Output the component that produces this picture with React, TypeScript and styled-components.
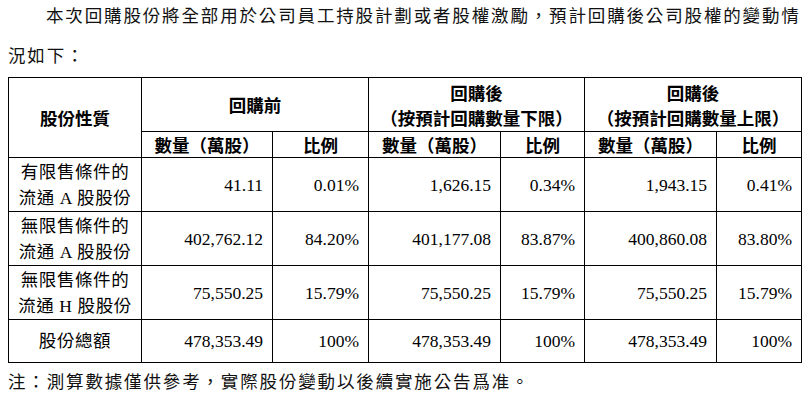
import React from "react";
import styled, { createGlobalStyle } from "styled-components";

const Global = createGlobalStyle`
  html, body { margin: 0; padding: 0; background: #fff; }
  body { font-family: "Liberation Serif", "Noto Sans CJK TC", serif; color: #000; }
`;

const Page = styled.div`
  width: 806px;
  height: 404px;
  padding: 0 5px 0 8px;
  box-sizing: border-box;
  overflow: hidden;
`;

const Para = styled.p`
  margin: -4px 0 0 0;
  font-size: 17.5px;
  line-height: 40px;
  letter-spacing: 1.85px;
  text-indent: 38px;
  color: #111;
`;

const Table = styled.table`
  border-collapse: collapse;
  table-layout: fixed;
  width: 794px;
  margin-top: 1px;
  font-size: 17.5px;
`;

const Th = styled.th<{ $h?: number }>`
  border: 1px solid #000;
  font-family: "Noto Sans CJK TC", sans-serif;
  font-weight: 700;
  font-size: 17.5px;
  line-height: 25px;
  text-align: center;
  padding: 0;
  height: ${(p) => p.$h ?? 25}px;
`;

const Td = styled.td<{ $num?: boolean; $h?: number }>`
  border: 1px solid #000;
  padding: 0 ${(p) => (p.$num ? "9px" : "0")} 0 0;
  text-align: ${(p) => (p.$num ? "right" : "center")};
  line-height: 26px;
  height: ${(p) => p.$h ?? 53}px;
  white-space: nowrap;
`;

const Label = styled.span`
  display: block;
  letter-spacing: 0.6px;
`;

const Note = styled.p`
  margin: 6px 0 0 0;
  font-size: 17.5px;
  line-height: 26px;
  letter-spacing: 1.85px;
  color: #111;
`;

const rows = [
  { l1: "有限售條件的", l2: "流通 A 股股份", v: ["41.11", "0.01%", "1,626.15", "0.34%", "1,943.15", "0.41%"] },
  { l1: "無限售條件的", l2: "流通 A 股股份", v: ["402,762.12", "84.20%", "401,177.08", "83.87%", "400,860.08", "83.80%"] },
  { l1: "無限售條件的", l2: "流通 H 股股份", v: ["75,550.25", "15.79%", "75,550.25", "15.79%", "75,550.25", "15.79%"] },
];
const total = ["478,353.49", "100%", "478,353.49", "100%", "478,353.49", "100%"];

export default function App() {
  return (
    <Page>
      <Global />
      <Para>
        本次回購股份將全部用於公司員工持股計劃或者股權激勵，預計回購後公司股權的變動情況如下：
      </Para>
      <Table>
        <colgroup>
          <col style={{ width: 133 }} />
          <col style={{ width: 131 }} />
          <col style={{ width: 96 }} />
          <col style={{ width: 132 }} />
          <col style={{ width: 84 }} />
          <col style={{ width: 132 }} />
          <col style={{ width: 85 }} />
        </colgroup>
        <thead>
          <tr>
            <Th rowSpan={2} $h={53}>股份性質</Th>
            <Th colSpan={2} $h={53}>回購前</Th>
            <Th colSpan={2} $h={53}>回購後<br />（按預計回購數量下限）</Th>
            <Th colSpan={2} $h={53}>回購後<br />（按預計回購數量上限）</Th>
          </tr>
          <tr>
            <Th>數量（萬股）</Th>
            <Th>比例</Th>
            <Th>數量（萬股）</Th>
            <Th>比例</Th>
            <Th>數量（萬股）</Th>
            <Th>比例</Th>
          </tr>
        </thead>
        <tbody>
          {rows.map((r, i) => (
            <tr key={i}>
              <Td>
                <Label>{r.l1}</Label>
                <Label>{r.l2}</Label>
              </Td>
              {r.v.map((x, j) => (
                <Td key={j} $num>{x}</Td>
              ))}
            </tr>
          ))}
          <tr>
            <Td $h={42}><Label>股份總額</Label></Td>
            {total.map((x, j) => (
              <Td key={j} $num $h={42}>{x}</Td>
            ))}
          </tr>
        </tbody>
      </Table>
      <Note>注：測算數據僅供參考，實際股份變動以後續實施公告爲准。</Note>
    </Page>
  );
}
